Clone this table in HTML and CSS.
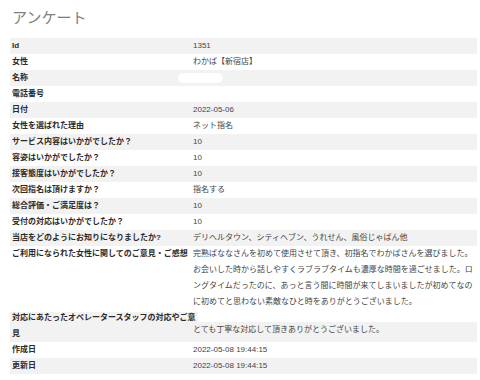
FILE: index.html
```html
<!DOCTYPE html>
<html lang="ja">
<head>
<meta charset="utf-8">
<title>アンケート</title>
<link rel="stylesheet" href="styles.css">
</head>
<body>
<div class="page">
  <h1 class="title">アンケート</h1>
  <div class="list">
    <div class="item alt"><div class="label">Id</div><div class="value">1351</div></div>
    <div class="item"><div class="label">女性</div><div class="value">わかば【新宿店】</div></div>
    <div class="item alt"><div class="label">名称</div><div class="value"><span class="redact"></span></div></div>
    <div class="item"><div class="label">電話番号</div><div class="value"></div></div>
    <div class="item alt"><div class="label">日付</div><div class="value">2022-05-06</div></div>
    <div class="item"><div class="label">女性を選ばれた理由</div><div class="value">ネット指名</div></div>
    <div class="item alt"><div class="label">サービス内容はいかがでしたか？</div><div class="value">10</div></div>
    <div class="item"><div class="label">容姿はいかがでしたか？</div><div class="value">10</div></div>
    <div class="item alt"><div class="label">接客態度はいかがでしたか？</div><div class="value">10</div></div>
    <div class="item"><div class="label">次回指名は頂けますか？</div><div class="value">指名する</div></div>
    <div class="item alt"><div class="label">総合評価・ご満足度は？</div><div class="value">10</div></div>
    <div class="item"><div class="label">受付の対応はいかがでしたか？</div><div class="value">10</div></div>
    <div class="item alt"><div class="label">当店をどのようにお知りになりましたか?</div><div class="value">デリヘルタウン、シティヘブン、うれせん、風俗じゃぱん他</div></div>
    <div class="item"><div class="label">ご利用になられた女性に関してのご意見・ご感想</div><div class="value multi">完熟ばななさんを初めて使用させて頂き、初指名でわかばさんを選びました。<br>お会いした時から話しやすくラブラブタイムも濃厚な時間を過ごせました。ロ<br>ングタイムだったのに、あっと言う間に時間が来てしまいましたが初めてなの<br>に初めてと思わない素敵なひと時をありがとうございました。</div></div>
    <div class="item tall">
      <div class="label tall-label"><span class="first-line">対応にあたったオペレータースタッフの対応やご意</span><br>見</div>
      <div class="value tall-value">とても丁寧な対応して頂きありがとうございました。</div>
    </div>
    <div class="item"><div class="label">作成日</div><div class="value">2022-05-08 19:44:15</div></div>
    <div class="item alt"><div class="label">更新日</div><div class="value">2022-05-08 19:44:15</div></div>
  </div>
</div>
</body>
</html>
```

FILE: styles.css
```css
html, body {
  margin: 0;
  padding: 0;
  background: #ffffff;
}

.page {
  padding: 8px 3px 0 10px;
  font-family: "Liberation Sans", "Noto Sans CJK JP", sans-serif;
  font-size: 8px;
  color: #444;
}

.title {
  margin: 0 0 10px 2px;
  font-size: 15px;
  line-height: 20px;
  font-weight: normal;
  color: #808080;
}

.list {
  display: flex;
  flex-direction: column;
}

.item {
  display: flex;
  line-height: 16px;
  min-height: 16px;
  padding-left: 2px;
}

.item.alt {
  background: #f2f2f2;
}

.label {
  flex: 0 0 181px;
  min-width: 0;
  font-weight: bold;
  color: #2b2b2b;
  white-space: nowrap;
}

.value {
  flex: 1;
  min-width: 0;
  white-space: nowrap;
}

.redact {
  display: inline-block;
  width: 45px;
  height: 10px;
  margin-left: -15px;
  vertical-align: middle;
  border-radius: 5px;
  background: #ffffff;
}

.item.tall {
  background: linear-gradient(to bottom, transparent 12px, #f2f2f2 12px);
}

.first-line {
  display: inline-block;
  line-height: 12px;
  margin-left: -2px;
  padding: 0 2px;
  background: #f2f2f2;
}

.tall-value {
  padding-top: 12px;
}
```
